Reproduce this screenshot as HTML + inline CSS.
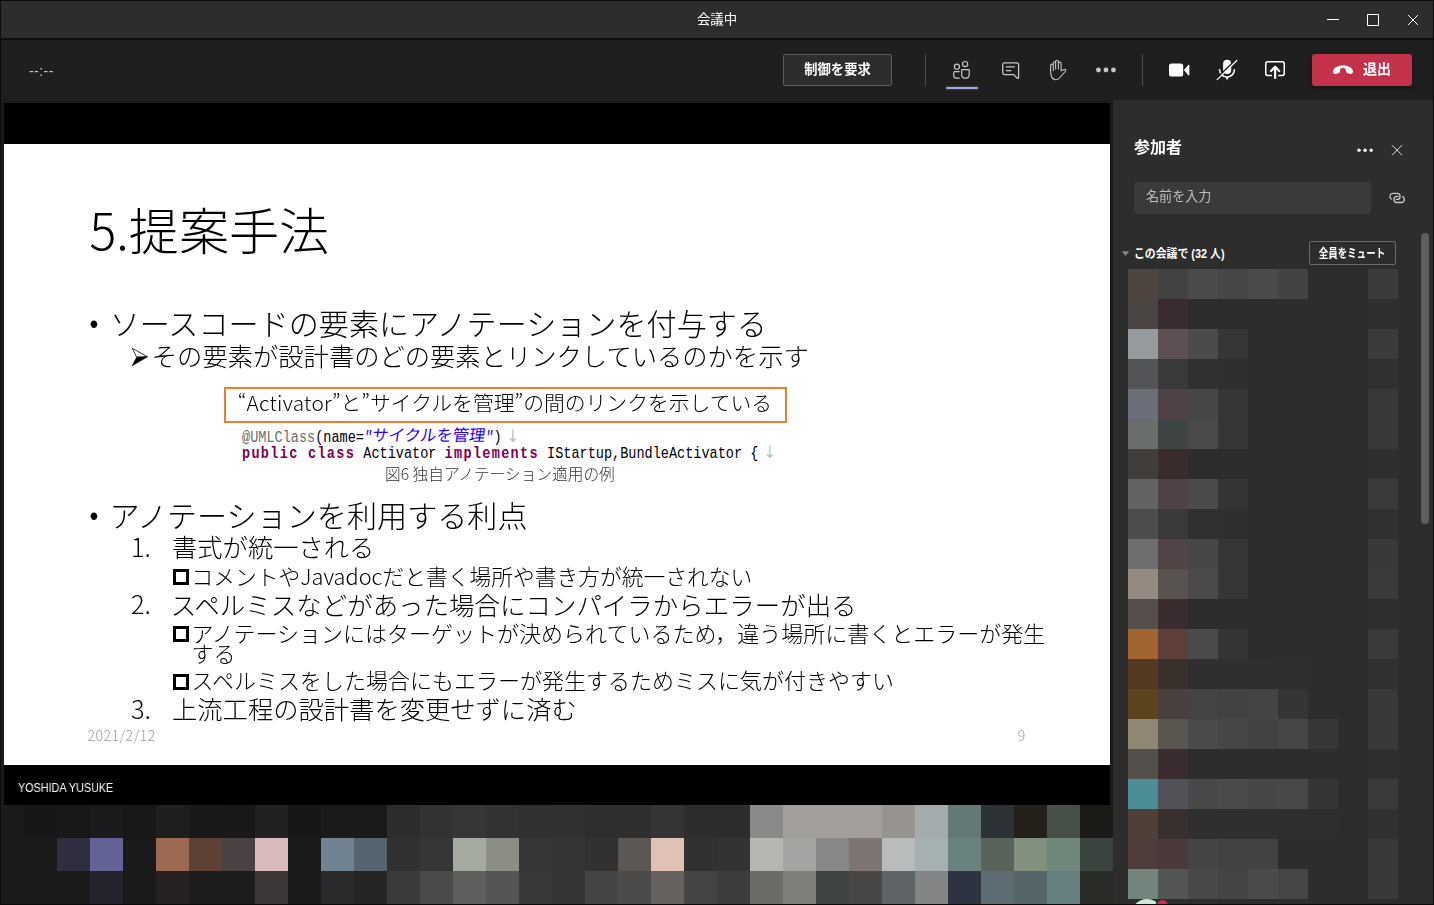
<!DOCTYPE html>
<html lang="ja">
<head>
<meta charset="utf-8">
<title>会議中</title>
<style>
*{box-sizing:border-box;margin:0;padding:0}
html,body{width:1434px;height:905px;overflow:hidden;background:#1f1f1f}
body{position:relative;font-family:"Liberation Sans","Noto Sans CJK JP",sans-serif;color:#fff}
.abs{position:absolute}
#timer,#title,#reqctl,#leave span,#ptitle,#search span,#muteall{will-change:transform}
#frame{position:absolute;left:0;top:0;width:1434px;height:905px;border:1px solid #0b0b0b;pointer-events:none;z-index:50}
#titlebar{left:0;top:0;width:1434px;height:39px;background:#2d2d2d}
#titleline{left:0;top:38px;width:1434px;height:2px;background:#0e0e0e}
#title{left:0;top:0;width:1434px;height:40px;line-height:40px;text-align:center;font-size:13.4px;color:#fff}
#toolbar{left:0;top:40px;width:1434px;height:60px;background:#1f1f1f}
#substrip{left:0;top:100px;width:1113px;height:805px;background:#1b1b1b}
#timer{left:29.3px;top:62px;font-size:14px;color:#c8c8c8;line-height:18px;letter-spacing:0.45px}
.tbtn{border:1px solid #5c5c5c;background:#2d2d2d;border-radius:2px;color:#fff;font-weight:bold;text-align:center}
#reqctl{left:783px;top:54px;width:109px;height:32px;line-height:30px;font-size:13.3px}
.vdiv{width:1px;height:32px;top:54px;background:#4a4a4a}
#leave{left:1312px;top:54px;width:100px;height:32px;background:#c4314b;border-radius:3px;box-shadow:0 2px 4px rgba(0,0,0,.35)}
#leave span{position:absolute;left:51px;top:0;line-height:31px;font-size:14px;font-weight:bold;color:#fff}
#underline{left:946px;top:87px;width:32px;height:2px;background:#a6a7dc;border-radius:1px;box-shadow:0 0 3px rgba(166,167,220,.5)}
/* stage */
#stage{left:4px;top:103px;width:1106px;height:702px;background:#000}
#slide{left:4px;top:144px;width:1106px;height:621px;background:#fff;color:#000;font-family:"Noto Sans CJK JP","Liberation Sans",sans-serif;font-weight:300;overflow:hidden}
#slide .t{position:absolute;white-space:nowrap;line-height:1;transform:translateZ(0)}
#presenter{left:18px;top:779.8px;font-size:12px;line-height:16px;color:#fff;white-space:nowrap;transform:translateZ(0) scaleX(.9);transform-origin:0 50%;will-change:transform}
/* panel */
#panel{left:1113px;top:100px;width:321px;height:805px;background:#2d2d2d}
#ptitle{left:1134px;top:136.5px;font-size:16px;line-height:22px;font-weight:bold;color:#fff}
#search{left:1134px;top:182px;width:237px;height:31.5px;background:#3b3a39;border-radius:3px}
#search span{position:absolute;left:12px;top:0;line-height:30px;font-size:13.1px;color:#bdbdbd}
#grp{left:1134px;top:244.5px;font-size:12px;line-height:18px;font-weight:bold;color:#fff;white-space:nowrap;transform:scaleX(.905);transform-origin:0 50%}
#muteall{left:1309px;top:241px;width:87px;height:24px;line-height:24px;font-size:12px;border-color:#6a6a6a;background:#2d2d2d}
#scroll{left:1421px;top:233px;width:8px;height:291px;background:#605e5c;border-radius:4px}
#slide .code{font-family:"Liberation Mono","Noto Sans CJK JP",monospace;font-size:13.55px;font-weight:400;color:#000;transform:scaleY(1.17);transform-origin:0 50%}
#slide .code b{color:#7f0055;letter-spacing:1.3px}
#slide .code .cj{font-size:16.3px;font-style:normal;display:inline-block;transform:scaleY(.85) skewX(-8deg)}
#slide .code .ar{color:#bdbdbd;font-family:"DejaVu Sans",sans-serif;font-size:15px;margin-left:5px}
#slide .sq{width:16px;height:16px;border:3px solid #000;background:#fff}
#muteall span{display:inline-block;white-space:nowrap;transform:scaleX(.79);transform-origin:50% 50%;margin:0 -10px}
.mz{position:absolute}
.mz i{position:absolute;display:block}
</style>
</head>
<body>
<div id="substrip" class="abs"></div>
<div id="titlebar" class="abs"></div>
<div id="titleline" class="abs"></div>
<div id="title" class="abs">会議中</div>
<div id="toolbar" class="abs"></div>
<div id="timer" class="abs">--:--</div>
<div id="reqctl" class="abs tbtn">制御を要求</div>
<div class="abs vdiv" style="left:925px"></div>
<div class="abs vdiv" style="left:1142px"></div>
<div id="underline" class="abs"></div>
<div id="leave" class="abs"><span>退出</span></div>

<div id="stage" class="abs"></div>
<div id="slide" class="abs">
<div class="t" id="s_title" style="left:85.5px;top:58.6px;font-size:50.1px">5.提案手法</div>
<div class="t" id="s_b1d" style="left:85.3px;top:162px;font-size:29.7px">•</div>
<div class="t" id="s_b1" style="left:105.7px;top:163.2px;font-size:30.1px">ソースコードの要素にアノテーションを付与する</div>
<svg class="abs" id="s_s1a" style="left:127px;top:203px" width="18" height="20" viewBox="0 0 18 20"><path d="M1.2 1.2L16.4 9.8L5.6 10.2z" fill="#fff" stroke="#000" stroke-width="0.8" stroke-linejoin="miter"/><path d="M5.6 10.2L16.4 9.8L1.2 18.8z" fill="#000" stroke="#000" stroke-width="0.6"/></svg>
<div class="t" id="s_s1" style="left:147.8px;top:199px;font-size:25.3px">その要素が設計書のどの要素とリンクしているのかを示す</div>
<div class="abs" id="s_box" style="left:220.4px;top:243.3px;width:562.2px;height:35.6px;border:2.7px solid #ed7d31;background:#fff"></div>
<div class="t" id="s_boxt" style="left:233.8px;top:247.8px;font-size:20.8px">“<span style="letter-spacing:.3px">Activator</span>”と”サイクルを管理”の間のリンクを示している</div>
<div class="t code" id="s_c1" style="left:238px;top:284.5px"><span style="color:#6e6e6e">@UMLClass</span>(name=<span style="color:#2a00ff;font-style:italic">"<span class="cj">サイクルを管理</span>"</span>)<span class="ar">↓</span></div>
<div class="t code" id="s_c2" style="left:238px;top:300.5px"><b>public class</b> Activator <b>implements</b> IStartup,BundleActivator {<span class="ar">↓</span></div>
<div class="t" id="s_cap" style="left:381px;top:321.8px;font-size:15.7px;color:#333">図6 独自アノテーション適用の例</div>
<div class="t" id="s_b2d" style="left:85.3px;top:353.5px;font-size:29.7px">•</div>
<div class="t" id="s_b2" style="left:105.5px;top:354.8px;font-size:30.1px">アノテーションを利用する利点</div>
<div class="t" id="s_n1" style="left:127px;top:390.4px;font-size:25.3px">1.</div>
<div class="t" id="s_n1t" style="left:168px;top:390.4px;font-size:25.3px">書式が統一される</div>
<div class="abs sq" id="s_q1" style="left:169px;top:425px"></div>
<div class="t" id="s_q1t" style="left:187.6px;top:420.6px;font-size:21.75px">コメントやJavadocだと書く場所や書き方が統一されない</div>
<div class="t" id="s_n2" style="left:127px;top:446.8px;font-size:25.3px">2.</div>
<div class="t" id="s_n2t" style="left:166.7px;top:446.8px;font-size:25.47px">スペルミスなどがあった場合にコンパイラからエラーが出る</div>
<div class="abs sq" id="s_q2" style="left:169px;top:482px"></div>
<div class="t" id="s_q2t" style="left:187.5px;top:476.6px;font-size:22px">アノテーションにはターゲットが決められているため，違う場所に書くとエラーが発生</div>
<div class="t" id="s_q2u" style="left:187.5px;top:497.3px;font-size:22px">する</div>
<div class="abs sq" id="s_q3" style="left:169px;top:530px"></div>
<div class="t" id="s_q3t" style="left:187.5px;top:524.3px;font-size:22px">スペルミスをした場合にもエラーが発生するためミスに気が付きやすい</div>
<div class="t" id="s_n3" style="left:127px;top:552.3px;font-size:25.3px">3.</div>
<div class="t" id="s_n3t" style="left:168px;top:552.3px;font-size:25.3px">上流工程の設計書を変更せずに済む</div>
<div class="t" id="s_date" style="left:83.4px;top:584px;font-size:14px;letter-spacing:.55px;color:#9a9a9a">2021/2/12</div>
<div class="t" id="s_pg" style="left:1013.8px;top:584px;font-size:14px;color:#9a9a9a">9</div>
</div>
<div id="presenter" class="abs">YOSHIDA YUSUKE</div>

<div id="panel" class="abs"></div>
<div id="ptitle" class="abs">参加者</div>
<div id="search" class="abs"><span>名前を入力</span></div>
<div id="grp" class="abs">この会議で (32 人)</div>
<div id="muteall" class="abs tbtn"><span>全員をミュート</span></div>
<div id="scroll" class="abs"></div>


<svg id="icons" class="abs" style="left:0;top:0;z-index:20" width="1434" height="230" viewBox="0 0 1434 230" fill="none" stroke-linecap="round" stroke-linejoin="round">
<!-- window controls -->
<g stroke="#fff" stroke-width="1" stroke-linecap="butt">
<path d="M1327 19.5H1339"/>
<rect x="1367.5" y="14.5" width="11" height="11"/>
<path d="M1408 15L1418 25M1418 15L1408 25"/>
</g>
<!-- people -->
<g stroke="#c8c6c4" stroke-width="1.2">
<circle cx="956.9" cy="66.7" r="2.55"/>
<circle cx="965.1" cy="64.1" r="2.6"/>
<path d="M961.7 69.7H969.2V74.9a3.3 3.3 0 0 1 -3.3 3.3h-0.9a3.3 3.3 0 0 1 -3.3 -3.3z"/>
<path d="M959.2 71.6H954.8a1.1 1.1 0 0 0 -1.1 1.1v2.2a3.3 3.3 0 0 0 3.3 3.3H959.2"/>
</g>
<!-- chat -->
<g stroke="#c8c6c4" stroke-width="1.3">
<path d="M1004.5 62.9H1016.8a1.8 1.8 0 0 1 1.8 1.8V77.4a0.9 0.9 0 0 1 -1.6 0.6L1013.7 74.6H1004.5a1.8 1.8 0 0 1 -1.8 -1.8V64.7a1.8 1.8 0 0 1 1.8 -1.8z"/>
<path d="M1006.4 66.9H1014.4M1006.4 70.6H1011"/>
</g>
<!-- hand -->
<g stroke="#c8c6c4" stroke-width="1.1">
<path d="M1050.6 72V65.5a1.35 1.35 0 0 1 2.7 0V62.9a1.15 1.15 0 0 1 2.3 0V61.7a1.4 1.4 0 0 1 2.8 0V63.5a1.35 1.35 0 0 1 2.7 0V70.8L1064.2 69.6a1 1 0 0 1 1.4 1.4L1059.4 78C1058.2 79.3 1057 79.7 1055.8 79.7C1053.5 79.7 1051.9 78 1051.2 75.5C1050.8 73.9 1050.6 73 1050.6 72z"/>
<path d="M1053.3 65.5V70.6M1055.6 62.9V68.9M1058.4 61.7V68.9"/>
</g>
<!-- more -->
<g fill="#c8c6c4" stroke="none">
<circle cx="1098.45" cy="69.95" r="2.45"/><circle cx="1105.95" cy="69.95" r="2.45"/><circle cx="1113.5" cy="69.95" r="2.45"/>
</g>
<!-- camera -->
<g fill="#fff" stroke="none">
<rect x="1169" y="63.5" width="14.2" height="13" rx="2.6"/>
<path d="M1183.9 70.1L1188.3 65a0.6 0.6 0 0 1 1.05 0.4V74.8a0.6 0.6 0 0 1 -1.05 0.4z"/>
</g>
<!-- mic off -->
<g>
<rect x="1223.1" y="59.8" width="8.1" height="14.3" rx="4" fill="#fff"/>
<path d="M1219.6 69.8a7.4 7.2 0 0 0 14.8 0" stroke="#fff" stroke-width="1.5"/>
<path d="M1227.1 77V79.4" stroke="#fff" stroke-width="2" stroke-linecap="butt"/>
<path d="M1216.1 78.8L1236.1 59.4" stroke="#1f1f1f" stroke-width="1.5"/>
<path d="M1217.2 79.6L1236.8 60.5" stroke="#fff" stroke-width="1.25"/>
</g>
<!-- share -->
<g stroke="#fff">
<rect x="1265.75" y="61.75" width="18.5" height="13.7" rx="1.9" stroke-width="1.5"/>
<path d="M1275.1 78.6V68" stroke="#1f1f1f" stroke-width="6.2" stroke-linecap="butt"/>
<path d="M1275.1 78V67.4M1271 71L1275.1 66.9L1279.2 71" stroke-width="2.2"/>
</g>
<!-- panel more / close / link -->
<g fill="#fff" stroke="none">
<circle cx="1359" cy="150.2" r="1.7"/><circle cx="1365.1" cy="150.2" r="1.7"/><circle cx="1371.2" cy="150.2" r="1.7"/>
</g>
<path d="M1392 145.2L1402 155.2M1402 145.2L1392 155.2" stroke="#e1e1e1" stroke-width="1" stroke-linecap="butt"/>
<g stroke="#c8c6c4" stroke-width="1.3">
<path d="M1391.4 199A3 3 0 0 1 1392.8 193.4H1397.1A3 3 0 0 1 1397.1 199.4H1396.3"/>
<path d="M1398.1 196.4H1397A3.05 3.05 0 0 0 1397 202.5H1401.3A3.05 3.05 0 0 0 1402.6 196.7"/>
</g>
</svg>
<svg class="abs" style="left:1332px;top:64px;z-index:21" width="22" height="12" viewBox="0 0 22 12">
<path d="M1 7.6C1 4.2 5.6 1.6 11 1.6S21 4.2 21 7.6c0 1.3 -0.8 2.4 -2.3 2.4c-1.5 0 -3.6 -0.7 -4.3 -1.7c-0.6 -0.9 -0.2 -2.6 -0.9 -3.4c-0.5 -0.5 -1.5 -0.8 -2.5 -0.8s-2 0.3 -2.5 0.8c-0.7 0.8 -0.3 2.5 -0.9 3.4c-0.7 1 -2.8 1.7 -4.3 1.7C1.8 10 1 8.9 1 7.6z" fill="#fff"/>
</svg>
<svg class="abs" style="left:1120px;top:248px;z-index:21" width="12" height="12" viewBox="0 0 12 12"><path d="M1.8 3.2H9.2L5.5 8z" fill="#8a8886"/></svg>
<div id="pmz" class="mz" style="left:1128px;top:269px;width:270px;height:630px">
<i style="left:0px;top:0px;width:30px;height:30px;background:#4e4540"></i>
<i style="left:30px;top:0px;width:30px;height:30px;background:#424242"></i>
<i style="left:60px;top:0px;width:30px;height:30px;background:#4a4a4a"></i>
<i style="left:90px;top:0px;width:30px;height:30px;background:#464646"></i>
<i style="left:120px;top:0px;width:30px;height:30px;background:#4a4a4a"></i>
<i style="left:150px;top:0px;width:30px;height:30px;background:#434343"></i>
<i style="left:240px;top:0px;width:30px;height:30px;background:#3b3b3b"></i>
<i style="left:0px;top:30px;width:30px;height:30px;background:#4a4542"></i>
<i style="left:30px;top:30px;width:30px;height:30px;background:#3a2c2e"></i>
<i style="left:240px;top:30px;width:30px;height:30px;background:#2f2f2f"></i>
<i style="left:0px;top:60px;width:30px;height:30px;background:#959a9e"></i>
<i style="left:30px;top:60px;width:30px;height:30px;background:#5c5055"></i>
<i style="left:60px;top:60px;width:30px;height:30px;background:#4b4b4b"></i>
<i style="left:90px;top:60px;width:30px;height:30px;background:#363636"></i>
<i style="left:240px;top:60px;width:30px;height:30px;background:#3b3b3b"></i>
<i style="left:0px;top:90px;width:30px;height:30px;background:#535358"></i>
<i style="left:30px;top:90px;width:30px;height:30px;background:#3a3a3a"></i>
<i style="left:60px;top:90px;width:30px;height:30px;background:#303030"></i>
<i style="left:90px;top:90px;width:30px;height:30px;background:#2f2f2f"></i>
<i style="left:240px;top:90px;width:30px;height:30px;background:#303030"></i>
<i style="left:0px;top:120px;width:30px;height:30px;background:#6b6f7a"></i>
<i style="left:30px;top:120px;width:30px;height:30px;background:#4f4246"></i>
<i style="left:60px;top:120px;width:30px;height:30px;background:#474747"></i>
<i style="left:90px;top:120px;width:30px;height:30px;background:#363636"></i>
<i style="left:240px;top:120px;width:30px;height:30px;background:#393939"></i>
<i style="left:0px;top:150px;width:30px;height:30px;background:#6a6e6a"></i>
<i style="left:30px;top:150px;width:30px;height:30px;background:#3f4445"></i>
<i style="left:60px;top:150px;width:30px;height:30px;background:#4a4a4a"></i>
<i style="left:90px;top:150px;width:30px;height:30px;background:#363636"></i>
<i style="left:240px;top:150px;width:30px;height:30px;background:#393939"></i>
<i style="left:0px;top:180px;width:30px;height:30px;background:#403d3a"></i>
<i style="left:30px;top:180px;width:30px;height:30px;background:#3a2b2d"></i>
<i style="left:240px;top:180px;width:30px;height:30px;background:#2f2f2f"></i>
<i style="left:0px;top:210px;width:30px;height:30px;background:#636363"></i>
<i style="left:30px;top:210px;width:30px;height:30px;background:#4e4245"></i>
<i style="left:60px;top:210px;width:30px;height:30px;background:#4a4a4a"></i>
<i style="left:90px;top:210px;width:30px;height:30px;background:#353535"></i>
<i style="left:240px;top:210px;width:30px;height:30px;background:#3a3a3a"></i>
<i style="left:0px;top:240px;width:30px;height:30px;background:#4c4c4c"></i>
<i style="left:30px;top:240px;width:30px;height:30px;background:#3a3a3a"></i>
<i style="left:60px;top:240px;width:30px;height:30px;background:#303030"></i>
<i style="left:90px;top:240px;width:30px;height:30px;background:#2f2f2f"></i>
<i style="left:240px;top:240px;width:30px;height:30px;background:#303030"></i>
<i style="left:0px;top:270px;width:30px;height:30px;background:#6e6e6e"></i>
<i style="left:30px;top:270px;width:30px;height:30px;background:#504446"></i>
<i style="left:60px;top:270px;width:30px;height:30px;background:#474747"></i>
<i style="left:90px;top:270px;width:30px;height:30px;background:#363636"></i>
<i style="left:240px;top:270px;width:30px;height:30px;background:#393939"></i>
<i style="left:0px;top:300px;width:30px;height:30px;background:#958a7f"></i>
<i style="left:30px;top:300px;width:30px;height:30px;background:#59534f"></i>
<i style="left:60px;top:300px;width:30px;height:30px;background:#4a4a4a"></i>
<i style="left:90px;top:300px;width:30px;height:30px;background:#363636"></i>
<i style="left:240px;top:300px;width:30px;height:30px;background:#3a3a3a"></i>
<i style="left:0px;top:330px;width:30px;height:30px;background:#554e4a"></i>
<i style="left:30px;top:330px;width:30px;height:30px;background:#3a2c2e"></i>
<i style="left:240px;top:330px;width:30px;height:30px;background:#2f2f2f"></i>
<i style="left:0px;top:360px;width:30px;height:30px;background:#a06530"></i>
<i style="left:30px;top:360px;width:30px;height:30px;background:#5e4038"></i>
<i style="left:60px;top:360px;width:30px;height:30px;background:#4a4a4a"></i>
<i style="left:90px;top:360px;width:30px;height:30px;background:#353535"></i>
<i style="left:240px;top:360px;width:30px;height:30px;background:#3a3a3a"></i>
<i style="left:0px;top:390px;width:30px;height:30px;background:#553a22"></i>
<i style="left:30px;top:390px;width:30px;height:30px;background:#3a302b"></i>
<i style="left:60px;top:390px;width:30px;height:30px;background:#2f2f2f"></i>
<i style="left:90px;top:390px;width:30px;height:30px;background:#2f2f2f"></i>
<i style="left:120px;top:390px;width:30px;height:30px;background:#2f2f2f"></i>
<i style="left:150px;top:390px;width:30px;height:30px;background:#2e2e2e"></i>
<i style="left:240px;top:390px;width:30px;height:30px;background:#303030"></i>
<i style="left:0px;top:420px;width:30px;height:30px;background:#5c451c"></i>
<i style="left:30px;top:420px;width:30px;height:30px;background:#493f3c"></i>
<i style="left:60px;top:420px;width:30px;height:30px;background:#444444"></i>
<i style="left:90px;top:420px;width:30px;height:30px;background:#424242"></i>
<i style="left:120px;top:420px;width:30px;height:30px;background:#444444"></i>
<i style="left:150px;top:420px;width:30px;height:30px;background:#353535"></i>
<i style="left:240px;top:420px;width:30px;height:30px;background:#393939"></i>
<i style="left:0px;top:450px;width:30px;height:30px;background:#8f8674"></i>
<i style="left:30px;top:450px;width:30px;height:30px;background:#59554f"></i>
<i style="left:60px;top:450px;width:30px;height:30px;background:#4a4a4a"></i>
<i style="left:90px;top:450px;width:30px;height:30px;background:#464646"></i>
<i style="left:120px;top:450px;width:30px;height:30px;background:#424242"></i>
<i style="left:150px;top:450px;width:30px;height:30px;background:#464646"></i>
<i style="left:180px;top:450px;width:30px;height:30px;background:#363636"></i>
<i style="left:240px;top:450px;width:30px;height:30px;background:#393939"></i>
<i style="left:0px;top:480px;width:30px;height:30px;background:#53504c"></i>
<i style="left:30px;top:480px;width:30px;height:30px;background:#3a2c2e"></i>
<i style="left:240px;top:480px;width:30px;height:30px;background:#2f2f2f"></i>
<i style="left:0px;top:510px;width:30px;height:30px;background:#4d8d96"></i>
<i style="left:30px;top:510px;width:30px;height:30px;background:#505258"></i>
<i style="left:60px;top:510px;width:30px;height:30px;background:#484848"></i>
<i style="left:90px;top:510px;width:30px;height:30px;background:#4a4a4a"></i>
<i style="left:120px;top:510px;width:30px;height:30px;background:#474747"></i>
<i style="left:150px;top:510px;width:30px;height:30px;background:#484848"></i>
<i style="left:180px;top:510px;width:30px;height:30px;background:#353535"></i>
<i style="left:240px;top:510px;width:30px;height:30px;background:#3a3a3a"></i>
<i style="left:0px;top:540px;width:30px;height:30px;background:#4e4038"></i>
<i style="left:30px;top:540px;width:30px;height:30px;background:#38302e"></i>
<i style="left:60px;top:540px;width:30px;height:30px;background:#2f2f2f"></i>
<i style="left:90px;top:540px;width:30px;height:30px;background:#2f2f2f"></i>
<i style="left:120px;top:540px;width:30px;height:30px;background:#2f2f2f"></i>
<i style="left:150px;top:540px;width:30px;height:30px;background:#2e2e2e"></i>
<i style="left:180px;top:540px;width:30px;height:30px;background:#2e2e2e"></i>
<i style="left:240px;top:540px;width:30px;height:30px;background:#303030"></i>
<i style="left:0px;top:570px;width:30px;height:30px;background:#4e3d3a"></i>
<i style="left:30px;top:570px;width:30px;height:30px;background:#4b3a3b"></i>
<i style="left:60px;top:570px;width:30px;height:30px;background:#454545"></i>
<i style="left:90px;top:570px;width:30px;height:30px;background:#424242"></i>
<i style="left:120px;top:570px;width:30px;height:30px;background:#424242"></i>
<i style="left:240px;top:570px;width:30px;height:30px;background:#393939"></i>
<i style="left:0px;top:600px;width:30px;height:30px;background:#74857e"></i>
<i style="left:30px;top:600px;width:30px;height:30px;background:#545656"></i>
<i style="left:60px;top:600px;width:30px;height:30px;background:#484848"></i>
<i style="left:90px;top:600px;width:30px;height:30px;background:#444444"></i>
<i style="left:120px;top:600px;width:30px;height:30px;background:#4a4a4a"></i>
<i style="left:150px;top:600px;width:30px;height:30px;background:#464646"></i>
<i style="left:240px;top:600px;width:30px;height:30px;background:#393939"></i>
</div>
<div id="bmz" class="mz" style="left:0;top:805px;width:1113px;height:99px;overflow:hidden">
<i style="left:24px;top:0px;width:33px;height:33px;background:#171717"></i>
<i style="left:57px;top:0px;width:33px;height:33px;background:#181818"></i>
<i style="left:90px;top:0px;width:33px;height:33px;background:#1b1b1d"></i>
<i style="left:123px;top:0px;width:33px;height:33px;background:#181818"></i>
<i style="left:156px;top:0px;width:33px;height:33px;background:#1e1e1e"></i>
<i style="left:189px;top:0px;width:33px;height:33px;background:#191919"></i>
<i style="left:222px;top:0px;width:33px;height:33px;background:#181818"></i>
<i style="left:255px;top:0px;width:33px;height:33px;background:#222021"></i>
<i style="left:288px;top:0px;width:33px;height:33px;background:#171717"></i>
<i style="left:321px;top:0px;width:33px;height:33px;background:#1b1b1b"></i>
<i style="left:354px;top:0px;width:33px;height:33px;background:#1a1a1a"></i>
<i style="left:387px;top:0px;width:33px;height:33px;background:#2d2d2d"></i>
<i style="left:420px;top:0px;width:33px;height:33px;background:#323232"></i>
<i style="left:453px;top:0px;width:33px;height:33px;background:#363636"></i>
<i style="left:486px;top:0px;width:33px;height:33px;background:#333333"></i>
<i style="left:519px;top:0px;width:33px;height:33px;background:#313131"></i>
<i style="left:552px;top:0px;width:33px;height:33px;background:#303030"></i>
<i style="left:585px;top:0px;width:33px;height:33px;background:#2e2e2e"></i>
<i style="left:618px;top:0px;width:33px;height:33px;background:#2e2e2e"></i>
<i style="left:651px;top:0px;width:33px;height:33px;background:#353334"></i>
<i style="left:684px;top:0px;width:33px;height:33px;background:#2d2d2d"></i>
<i style="left:717px;top:0px;width:33px;height:33px;background:#2d2d2d"></i>
<i style="left:750px;top:0px;width:33px;height:33px;background:#8c8a88"></i>
<i style="left:783px;top:0px;width:33px;height:33px;background:#a29e99"></i>
<i style="left:816px;top:0px;width:33px;height:33px;background:#a29e99"></i>
<i style="left:849px;top:0px;width:33px;height:33px;background:#a29e99"></i>
<i style="left:882px;top:0px;width:33px;height:33px;background:#979490"></i>
<i style="left:915px;top:0px;width:33px;height:33px;background:#a3abac"></i>
<i style="left:948px;top:0px;width:33px;height:33px;background:#647876"></i>
<i style="left:981px;top:0px;width:33px;height:33px;background:#2d3236"></i>
<i style="left:1014px;top:0px;width:33px;height:33px;background:#241f18"></i>
<i style="left:1047px;top:0px;width:33px;height:33px;background:#465048"></i>
<i style="left:1080px;top:0px;width:33px;height:33px;background:#1b1c17"></i>
<i style="left:24px;top:33px;width:33px;height:33px;background:#1b1b1b"></i>
<i style="left:57px;top:33px;width:33px;height:33px;background:#2f2d40"></i>
<i style="left:90px;top:33px;width:33px;height:33px;background:#636395"></i>
<i style="left:123px;top:33px;width:33px;height:33px;background:#1a1a1a"></i>
<i style="left:156px;top:33px;width:33px;height:33px;background:#9c6a52"></i>
<i style="left:189px;top:33px;width:33px;height:33px;background:#5d4135"></i>
<i style="left:222px;top:33px;width:33px;height:33px;background:#4a4142"></i>
<i style="left:255px;top:33px;width:33px;height:33px;background:#d9babd"></i>
<i style="left:288px;top:33px;width:33px;height:33px;background:#1b1b1b"></i>
<i style="left:321px;top:33px;width:33px;height:33px;background:#718292"></i>
<i style="left:354px;top:33px;width:33px;height:33px;background:#56646f"></i>
<i style="left:387px;top:33px;width:33px;height:33px;background:#313131"></i>
<i style="left:420px;top:33px;width:33px;height:33px;background:#363636"></i>
<i style="left:453px;top:33px;width:33px;height:33px;background:#a5aba0"></i>
<i style="left:486px;top:33px;width:33px;height:33px;background:#8b8e84"></i>
<i style="left:519px;top:33px;width:33px;height:33px;background:#363636"></i>
<i style="left:552px;top:33px;width:33px;height:33px;background:#343434"></i>
<i style="left:585px;top:33px;width:33px;height:33px;background:#313131"></i>
<i style="left:618px;top:33px;width:33px;height:33px;background:#5e5855"></i>
<i style="left:651px;top:33px;width:33px;height:33px;background:#dfc1b6"></i>
<i style="left:684px;top:33px;width:33px;height:33px;background:#313131"></i>
<i style="left:717px;top:33px;width:33px;height:33px;background:#333333"></i>
<i style="left:750px;top:33px;width:33px;height:33px;background:#b8b6b1"></i>
<i style="left:783px;top:33px;width:33px;height:33px;background:#a3a5a2"></i>
<i style="left:816px;top:33px;width:33px;height:33px;background:#878787"></i>
<i style="left:849px;top:33px;width:33px;height:33px;background:#7e7572"></i>
<i style="left:882px;top:33px;width:33px;height:33px;background:#b8bcbc"></i>
<i style="left:915px;top:33px;width:33px;height:33px;background:#a5b0b2"></i>
<i style="left:948px;top:33px;width:33px;height:33px;background:#6a827f"></i>
<i style="left:981px;top:33px;width:33px;height:33px;background:#5a635b"></i>
<i style="left:1014px;top:33px;width:33px;height:33px;background:#82917f"></i>
<i style="left:1047px;top:33px;width:33px;height:33px;background:#6f887b"></i>
<i style="left:1080px;top:33px;width:33px;height:33px;background:#3b433e"></i>
<i style="left:24px;top:66px;width:33px;height:33px;background:#1b1b1b"></i>
<i style="left:57px;top:66px;width:33px;height:33px;background:#1a1a1a"></i>
<i style="left:90px;top:66px;width:33px;height:33px;background:#24222c"></i>
<i style="left:123px;top:66px;width:33px;height:33px;background:#1a1a1a"></i>
<i style="left:156px;top:66px;width:33px;height:33px;background:#252120"></i>
<i style="left:189px;top:66px;width:33px;height:33px;background:#1c1c1c"></i>
<i style="left:222px;top:66px;width:33px;height:33px;background:#1c1c1c"></i>
<i style="left:255px;top:66px;width:33px;height:33px;background:#3d3837"></i>
<i style="left:288px;top:66px;width:33px;height:33px;background:#1a1a1a"></i>
<i style="left:321px;top:66px;width:33px;height:33px;background:#2a2a2c"></i>
<i style="left:354px;top:66px;width:33px;height:33px;background:#252525"></i>
<i style="left:387px;top:66px;width:33px;height:33px;background:#3a3a3a"></i>
<i style="left:420px;top:66px;width:33px;height:33px;background:#4b4b4b"></i>
<i style="left:453px;top:66px;width:33px;height:33px;background:#5f5f5d"></i>
<i style="left:486px;top:66px;width:33px;height:33px;background:#555555"></i>
<i style="left:519px;top:66px;width:33px;height:33px;background:#393939"></i>
<i style="left:552px;top:66px;width:33px;height:33px;background:#343434"></i>
<i style="left:585px;top:66px;width:33px;height:33px;background:#454545"></i>
<i style="left:618px;top:66px;width:33px;height:33px;background:#4b4b4b"></i>
<i style="left:651px;top:66px;width:33px;height:33px;background:#66605f"></i>
<i style="left:684px;top:66px;width:33px;height:33px;background:#444444"></i>
<i style="left:717px;top:66px;width:33px;height:33px;background:#3c3c3c"></i>
<i style="left:750px;top:66px;width:33px;height:33px;background:#6d6b66"></i>
<i style="left:783px;top:66px;width:33px;height:33px;background:#80807b"></i>
<i style="left:816px;top:66px;width:33px;height:33px;background:#404344"></i>
<i style="left:849px;top:66px;width:33px;height:33px;background:#484745"></i>
<i style="left:882px;top:66px;width:33px;height:33px;background:#5e6365"></i>
<i style="left:915px;top:66px;width:33px;height:33px;background:#828584"></i>
<i style="left:948px;top:66px;width:33px;height:33px;background:#2d3340"></i>
<i style="left:981px;top:66px;width:33px;height:33px;background:#5d6c72"></i>
<i style="left:1014px;top:66px;width:33px;height:33px;background:#556669"></i>
<i style="left:1047px;top:66px;width:33px;height:33px;background:#668082"></i>
<i style="left:1080px;top:66px;width:33px;height:33px;background:#2a2c28"></i>
</div>
<div class="abs" style="left:1113px;top:899px;width:321px;height:5px;overflow:hidden">
<div class="abs" style="left:17.5px;top:0;width:32px;height:32px;border-radius:50%;background:#cfe8dc"></div>
<div class="abs" style="left:43.5px;top:0.5px;width:11px;height:11px;border-radius:50%;background:#c4314b;box-shadow:0 0 0 1.5px #2d2d2d"></div>
</div>
<div id="frame"></div>
</body>
</html>
